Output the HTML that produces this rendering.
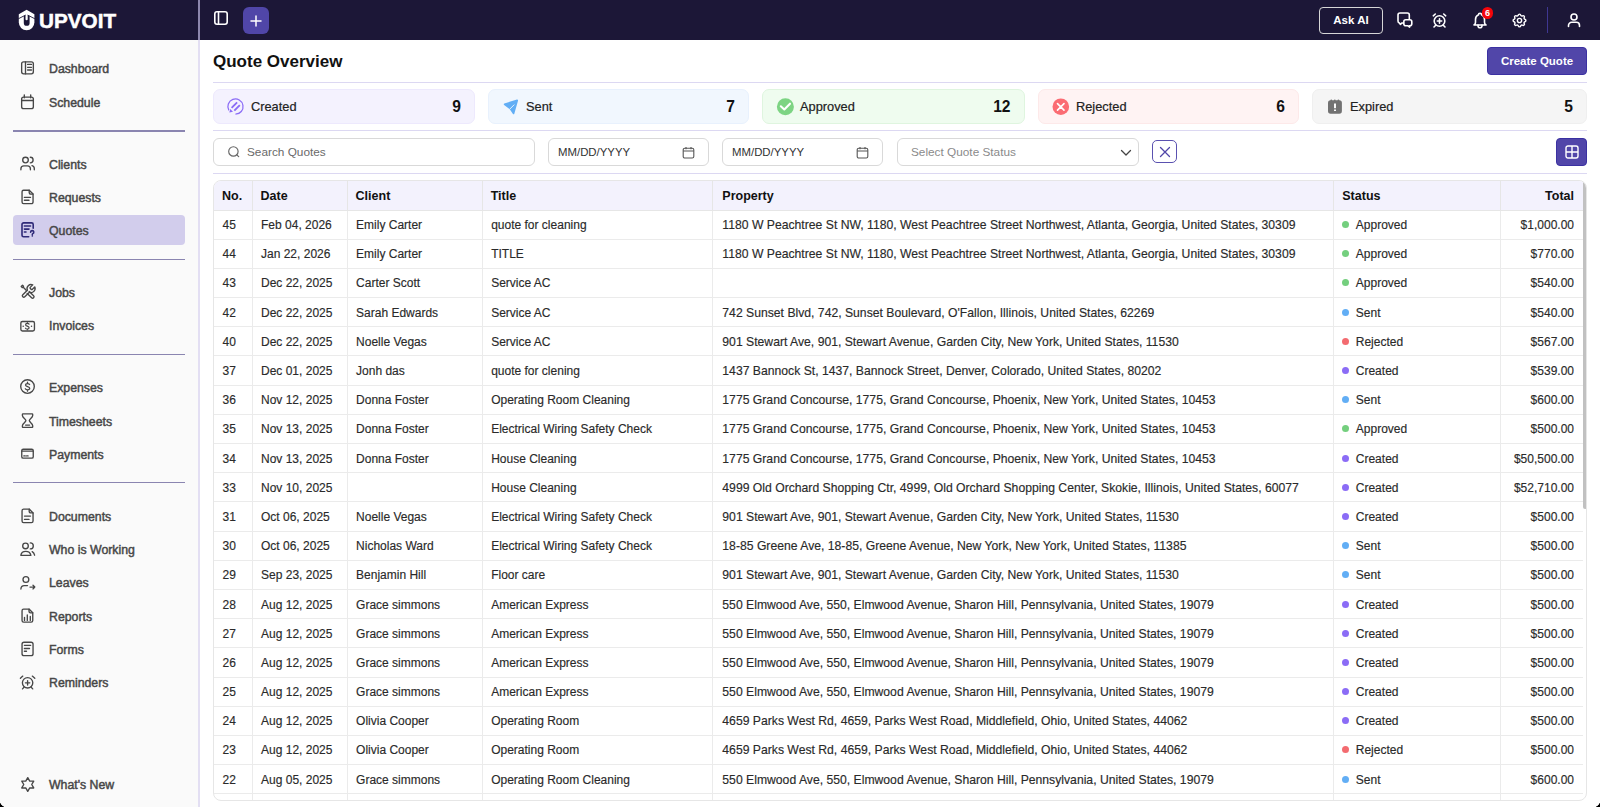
<!DOCTYPE html><html><head><meta charset="utf-8"><style>
*{box-sizing:border-box;margin:0;padding:0}
html,body{width:1600px;height:807px;overflow:hidden;background:#fff;font-family:"Liberation Sans",sans-serif;color:#222}
svg{display:block}
#hdr{position:absolute;left:0;top:0;width:1600px;height:40px;background:#1c1737}
#hdr .vl{position:absolute;left:198px;top:0;width:2px;height:40px;background:#8d87ad}
#side{position:absolute;left:0;top:40px;width:200px;height:767px;background:#fafafa;border-right:2px solid #e3dff3}
.nav{position:absolute;left:13px;width:172px;height:30px;border-radius:4px}
.nav.act{background:#d2cdec}
.nav svg{position:absolute;left:7px;top:7.3px;width:16px;height:16px;overflow:visible;fill:none;stroke:#474747;stroke-width:1.35;stroke-linecap:round;stroke-linejoin:round}
.nav span{position:absolute;left:36px;top:9px;font-size:12.3px;color:#474747;line-height:14px;white-space:nowrap;-webkit-text-stroke:0.45px #474747}
.sdiv{position:absolute;left:12.5px;width:172.5px;height:1.5px;background:#8a85b0}
.hic{position:absolute;fill:none;stroke:#fff;stroke-width:1.6;stroke-linecap:round;stroke-linejoin:round}
#title{position:absolute;left:213px;top:52px;font-size:17px;font-weight:bold;color:#111;line-height:20px}
#cq{position:absolute;left:1487px;top:47px;width:100px;height:28px;background:#5146a9;border:1px solid #3b31a2;border-radius:4px;color:#fff;font-size:11.5px;font-weight:bold;line-height:26px;text-align:center}
.hdiv{position:absolute;left:213px;width:1374px;height:1px;background:#dcd8f2}
.card{position:absolute;top:89px;height:35px;border-radius:7px;border:1px solid}
.card .lb{position:absolute;left:37px;top:9px;font-size:12.8px;color:#222;line-height:15px;-webkit-text-stroke:0.2px #222}
.card .nm{position:absolute;right:13px;top:7.5px;font-size:15.6px;font-weight:bold;color:#111;line-height:17px}
.card svg{position:absolute;left:13px;top:8px;width:18px;height:18px}
.inp{position:absolute;top:138px;height:28px;border:1px solid #d9d9d9;border-radius:6px;background:#fff}
.inp .tx{position:absolute;top:6px;font-size:11.8px;line-height:14px;white-space:nowrap}
#tbl{position:absolute;left:213px;top:180px;width:1374px;height:621px;border:1px solid #e6e6e6;border-radius:8px;overflow:hidden}
table{border-collapse:collapse;table-layout:fixed;position:absolute;left:0;top:0;width:1369px}
th{background:#f3f2fd;height:29px;text-align:left;font-size:12.5px;font-weight:bold;color:#111;padding:1px 0 0 8px;border-right:1px solid #e6e6e6;border-bottom:1px solid #e6e6e6;white-space:nowrap}
td{height:29.2px;font-size:12px;color:#2a2a2a;-webkit-text-stroke:0.15px #2a2a2a;padding:1px 0 0 8.5px;border-right:1px solid #ebebeb;border-bottom:1px solid #ebebeb;white-space:nowrap;overflow:hidden}
th:last-child,td:last-child{border-right:none;text-align:right;padding-left:0;padding-right:9px}
.dot{display:inline-block;width:7px;height:7px;border-radius:50%;margin-right:6.5px;vertical-align:1px}
td.pr{font-size:12.2px;padding-left:9.5px}
td.st{padding-left:8px}
#sb{position:absolute;left:1369px;top:0;width:4px;height:328px;background:#c1c1c1;border-radius:2px}
</style></head><body>
<div id="hdr"><div class="vl"></div>
<svg style="position:absolute;left:18px;top:9px" width="17" height="22" viewBox="0 0 17 22"><path fill="#fff" d="M0.8 5.3L8.6 0.8 16.4 5.3V13.3A7.8 8 0 0 1 0.8 13.3Z"/><path fill="#1c1737" d="M5.8 6.9L8.6 5.5 11.6 6.9V13.9A2.9 2.9 0 0 1 5.8 13.9Z"/><path fill="#fff" d="M7.5 4.5H9.7V10.2A1.1 1.1 0 0 1 7.5 10.2Z"/><path d="M0.3 9.8L7.5 6.1M9.7 6.1L16.9 9.8" fill="none" stroke="#1c1737" stroke-width="0.9"/></svg>
<div style="position:absolute;left:39px;top:10px;font-size:20.7px;font-weight:bold;color:#fff;line-height:22px;-webkit-text-stroke:0.5px #fff">UPVOIT</div>
<svg class="hic" style="left:213px;top:10px" width="16" height="16" viewBox="0 0 16 16"><rect x="1.8" y="1.8" width="12.4" height="12.4" rx="2.2"/><path d="M5.5 2v12"/></svg>
<div style="position:absolute;left:243px;top:7px;width:26px;height:27px;border-radius:6px;background:#5046a8"></div>
<svg class="hic" style="left:249px;top:13.5px" width="14" height="14" viewBox="0 0 14 14"><path d="M7 2v10M2 7h10" stroke-width="1.5"/></svg>
<div style="position:absolute;left:1319px;top:7px;width:64px;height:27px;border:1.5px solid #d6d6d6;border-radius:4px;color:#fff;font-size:11.5px;font-weight:bold;text-align:center;line-height:24px">Ask AI</div>
<svg class="hic" style="left:1396px;top:12px;overflow:visible" width="18" height="17" viewBox="0 0 18 17"><path d="M13.3 7V3A2 2 0 0 0 11.3 1H4A2 2 0 0 0 2 3V9A2 2 0 0 0 3.3 10.9L4.3 12.3L6 11H7.6"/><path d="M9.8 7.8H13.8A2 2 0 0 1 15.8 9.8V11.7A2 2 0 0 1 13.8 13.7H13.4L13.6 15.2L11.6 13.7H9.8A2 2 0 0 1 7.8 11.7V9.8A2 2 0 0 1 9.8 7.8Z"/></svg>
<svg class="hic" style="left:1431px;top:12px" width="17" height="17" viewBox="0 0 17 17"><circle cx="8.5" cy="9" r="5.3"/><path d="M2.3 3.8L4.3 2M14.7 3.8L12.7 2M8.5 6.8v4.4M6.3 9h4.4M4.7 13.2l-1.7 1.8M12.3 13.2l1.7 1.8"/></svg>
<svg class="hic" style="left:1472px;top:12px" width="16" height="17" viewBox="0 0 16 17"><path d="M6.5 2.8a1.5 1.5 0 0 1 3 0A5 5 0 0 1 12.5 7.5v2.8a3 3 0 0 0 1.5 2.7H2a3 3 0 0 0 1.5-2.7V7.5A5 5 0 0 1 6.5 2.8"/><path d="M6 13v.7a2 2 0 0 0 4 0V13"/></svg>
<div style="position:absolute;left:1481.8px;top:7px;width:11.6px;height:11.6px;border-radius:50%;background:#f5050a;color:#fff;font-size:9px;font-weight:bold;text-align:center;line-height:12.4px">6</div>
<svg class="hic" style="left:1511px;top:12px" width="17" height="17" viewBox="0 0 24 24" style="stroke-width:2"><path stroke-width="2" d="M10.3 4.3c.4-1.8 3-1.8 3.4 0a1.7 1.7 0 0 0 2.6 1.1c1.5-.9 3.3.8 2.4 2.4a1.7 1.7 0 0 0 1 2.5c1.8.4 1.8 3 0 3.4a1.7 1.7 0 0 0-1 2.6c.9 1.5-.9 3.3-2.4 2.4a1.7 1.7 0 0 0-2.6 1c-.4 1.8-3 1.8-3.4 0a1.7 1.7 0 0 0-2.6-1c-1.5.9-3.3-.9-2.4-2.4a1.7 1.7 0 0 0-1-2.6c-1.8-.4-1.8-3 0-3.4a1.7 1.7 0 0 0 1-2.5c-.9-1.6.9-3.3 2.4-2.4 1 .6 2.3 0 2.6-1.1z"/><circle stroke-width="2" cx="12" cy="12" r="3"/></svg>
<div style="position:absolute;left:1546.5px;top:7px;width:1.5px;height:26px;background:#3f3792"></div>
<svg class="hic" style="left:1566px;top:12px" width="16" height="16" viewBox="0 0 16 16"><circle cx="8" cy="5" r="3"/><path d="M2.5 14.5v-1a3.2 3.2 0 0 1 3.2-3.2h4.6a3.2 3.2 0 0 1 3.2 3.2v1"/></svg>
</div>
<div id="side">
<div class="nav" style="top:13.2px"><svg viewBox="0 0 16 16"><rect x="1.65" y="1.85" width="11.7" height="12" rx="2"/><path d="M5.5 2v11.7M7.6 4.4h3.9M7.6 7.3h3.9M7.6 10h3.9"/></svg><span>Dashboard</span></div>
<div class="nav" style="top:46.5px"><svg viewBox="0 0 16 16"><rect x="1.65" y="3.05" width="11.7" height="11.6" rx="2"/><path d="M1.8 6.5h11.4M4.3 0.8v2.9M10.7 0.8v2.9"/></svg><span>Schedule</span></div>
<div class="nav" style="top:108.9px"><svg viewBox="0 0 16 16"><circle cx="5.5" cy="4" r="2.8"/><path d="M10.3 1.2A2.8 2.8 0 0 1 10.3 6.8M0.9 13.7V12.8A3 3 0 0 1 3.9 9.8H7.4A3 3 0 0 1 10.4 12.8V13.7M12 9.7A3 3 0 0 1 14.3 12.6V13.7"/></svg><span>Clients</span></div>
<div class="nav" style="top:141.9px"><svg viewBox="0 0 16 16"><path d="M9.2 1.25H3.6A1.6 1.6 0 0 0 2.05 2.85V13.05A1.6 1.6 0 0 0 3.6 14.65H11.45A1.6 1.6 0 0 0 13.05 13.05V5.1Z"/><path d="M9.2 1.25V3.6A1.5 1.5 0 0 0 10.7 5.1H13.05M4.4 8.4h6.1M4.4 11.2h4.6"/></svg><span>Requests</span></div>
<div class="nav act" style="top:175.2px"><svg viewBox="0 0 16 16" style="stroke:#2f2a78"><path d="M8.7 14.8H3.6A1.6 1.6 0 0 1 2 13.2V2.5A1.6 1.6 0 0 1 3.6 0.9H11.6A1.6 1.6 0 0 1 13.2 2.5V6.2M4.4 4h6.1M4.4 7.1h4.6M4.4 10h1.6M10.6 10.3A1.6 1.6 0 1 1 12.6 11.8Q12.3 12 12.3 12.5M12.3 13.9h0.01" stroke-width="1.6"/></svg><span>Quotes</span></div>
<div class="nav" style="top:236.9px"><svg viewBox="0 0 16 16"><g transform="translate(0.35,-0.83) scale(0.67)" stroke-width="2.05"><path d="M14.7 6.3a1 1 0 0 0 0 1.4l1.6 1.6a1 1 0 0 0 1.4 0l3.77-3.77a6 6 0 0 1-7.94 7.94l-6.91 6.91a2.12 2.12 0 0 1-3-3l6.91-6.91a6 6 0 0 1 7.94-7.94l-3.76 3.76z"/></g><path d="M1.2 2.5L2.5 1.2 3.5 2.2 3.3 3.3 2.2 3.5Z M3.3 3.3L6.2 6.2 M9.2 7.4L13.6 11.8A1.4 1.4 0 0 1 11.6 13.8L7.2 9.4"/></svg><span>Jobs</span></div>
<div class="nav" style="top:270.3px"><svg viewBox="0 0 16 16"><rect x="0.85" y="3.45" width="13.6" height="9.5" rx="1.6"/><path d="M9.1 6.1C8.7 5.6 8 5.4 7.3 5.4C6.3 5.4 5.6 5.9 5.6 6.7C5.6 8.4 9.1 7.9 9.1 9.7C9.1 10.5 8.3 11 7.3 11C6.5 11 5.8 10.7 5.5 10.2M7.35 4.6v0.8M7.35 11v0.8" stroke-width="1.2"/><circle cx="3.2" cy="8.2" r="0.75" fill="#474747" stroke="none"/><circle cx="11.5" cy="8.2" r="0.75" fill="#474747" stroke="none"/></svg><span>Invoices</span></div>
<div class="nav" style="top:332.1px"><svg viewBox="0 0 16 16"><circle cx="7.5" cy="7.5" r="6.8"/><path d="M9.6 5.5C9.2 4.9 8.5 4.6 7.5 4.6C6.3 4.6 5.5 5.3 5.5 6.1C5.5 8.1 9.7 7.3 9.7 9.3C9.7 10.2 8.8 10.8 7.5 10.8C6.5 10.8 5.7 10.4 5.3 9.7M7.5 3.2v1.4M7.5 10.8v1.4" stroke-width="1.3"/></svg><span>Expenses</span></div>
<div class="nav" style="top:365.7px"><svg viewBox="0 0 16 16"><path d="M3 0.8H12.1A0.6 0.6 0 0 1 12.7 1.4V2.5C12.7 4.8 9.3 6 9.3 7.6C9.3 9.2 12.7 10.4 12.7 12.7V13.8A0.6 0.6 0 0 1 12.1 14.4H3A0.6 0.6 0 0 1 2.4 13.8V12.7C2.4 10.4 5.9 9.2 5.9 7.6C5.9 6 2.4 4.8 2.4 2.5V1.4A0.6 0.6 0 0 1 3 0.8ZM5.6 12.1H9.6"/></svg><span>Timesheets</span></div>
<div class="nav" style="top:399.0px"><svg viewBox="0 0 16 16"><rect x="1.75" y="3.25" width="11.5" height="8.9" rx="1.5"/><path d="M1.9 5.2h11.2M3.8 9.9h1.5M6.6 9.9h1.5" stroke-width="1.3"/></svg><span>Payments</span></div>
<div class="nav" style="top:460.6px"><svg viewBox="0 0 16 16"><path d="M9.2 1.05H3.6A1.6 1.6 0 0 0 2.05 2.65V12.95A1.6 1.6 0 0 0 3.6 14.55H11.45A1.6 1.6 0 0 0 13.05 12.95V4.9Z"/><path d="M9.2 1.05V3.4A1.5 1.5 0 0 0 10.7 4.9H13.05M4.5 8.1h6M4.5 11.4h4.5"/></svg><span>Documents</span></div>
<div class="nav" style="top:493.7px"><svg viewBox="0 0 16 16"><circle cx="5.5" cy="4.9" r="2.8"/><path d="M0.8 14.3C1.3 11.6 3.3 10.4 5.8 10.4C8.3 10.4 10.3 11.6 10.9 14.3ZM10.3 1.9A3 3 0 0 1 10.3 7.9M12.2 10.6C13.3 11.2 14.2 12.4 14.6 14.2"/></svg><span>Who is Working</span></div>
<div class="nav" style="top:527.4px"><svg viewBox="0 0 16 16"><circle cx="5.9" cy="4.5" r="2.9"/><path d="M0.9 14C1 12 2 10.6 4.2 10.6H7.5M10 12.1H14.8M13 10.3L14.8 12.1 13 13.9"/></svg><span>Leaves</span></div>
<div class="nav" style="top:560.8px"><svg viewBox="0 0 16 16"><path d="M9 1.05H3.6A1.6 1.6 0 0 0 2.05 2.65V12.45A1.6 1.6 0 0 0 3.6 14.05H11.15A1.6 1.6 0 0 0 12.75 12.45V4.8Z"/><path d="M9 1.05V3.3A1.5 1.5 0 0 0 10.5 4.8H12.75M4.5 9.4V12.4M7.3 6.9V12.4M10.3 8.4V12.4"/></svg><span>Reports</span></div>
<div class="nav" style="top:593.8px"><svg viewBox="0 0 16 16"><rect x="2.05" y="1.25" width="11" height="13.4" rx="2"/><path d="M4.4 4.3h6.3M4.4 7.5h5.1M4.4 10.2h2.1"/></svg><span>Forms</span></div>
<div class="nav" style="top:627.2px"><svg viewBox="0 0 16 16"><circle cx="7.6" cy="8.8" r="5.2"/><path d="M0.4 4.3L2.8 2.1M12.3 2.1L14.8 4.3M4 13.3L2.5 14.9M11.2 13.3L12.7 14.9M7.6 6.6V11M5.4 8.8H9.8"/></svg><span>Reminders</span></div>
<div class="nav" style="top:728.6px"><svg viewBox="0 0 16 16"><path d="M7.75 1.60 L9.74 5.05 L13.73 5.05 L11.73 8.50 L13.73 11.95 L9.74 11.95 L7.75 15.40 L5.76 11.95 L1.77 11.95 L3.77 8.50 L1.77 5.05 L5.76 5.05Z"/></svg><span>What's New</span></div>
<div class="sdiv" style="top:90.4px"></div>
<div class="sdiv" style="top:218.8px"></div>
<div class="sdiv" style="top:313.6px"></div>
<div class="sdiv" style="top:441.9px"></div>
</div>
<div id="title">Quote Overview</div>
<div id="cq">Create Quote</div>
<div class="hdiv" style="top:82px"></div>
<div class="hdiv" style="top:130px"></div>
<div class="hdiv" style="top:173px"></div>
<div class="card" style="left:213px;width:262px;background:#f4f2fe;border-color:#ede9fd"><div class="lb">Created</div><div class="nm">9</div></div>
<svg style="position:absolute;left:224px;top:96px" width="24" height="22" viewBox="0 0 24 22"><path d="M11.45 18.2A7.6 7.6 0 1 0 4.87 14.4" fill="none" stroke="#8b6cf6" stroke-width="1.25"/><path d="M7.6 11.9L13.1 6.4M10.3 14.6L15.8 9.1" stroke="#8b6cf6" stroke-width="1.9"/><path d="M5.3 16.6L6.3 13L9 15.7z" fill="#8b6cf6"/></svg>
<div class="card" style="left:488px;width:261px;background:#f1f7fe;border-color:#e8f1fd"><div class="lb">Sent</div><div class="nm">7</div></div>
<svg style="position:absolute;left:500px;top:96px" width="24" height="22" viewBox="0 0 24 22"><path d="M4.6 8.3L17.2 4.4 13.5 17.4 10.3 12.6z" fill="#62aef5" stroke="#62aef5" stroke-width="1.7" stroke-linejoin="round"/><path d="M9.9 13L14.3 8.6" stroke="#f1f7fe" stroke-width="0.9"/></svg>
<div class="card" style="left:762px;width:262.5px;background:#effcef;border-color:#dff5df"><div class="lb">Approved</div><div class="nm">12</div></div>
<svg style="position:absolute;left:770px;top:94px" width="30" height="26" viewBox="0 0 30 26"><circle cx="15.4" cy="12.8" r="8.5" fill="#7dd483"/><path d="M10.8 12.3l3.5 3.2 5.7-5.8" fill="none" stroke="#fff" stroke-width="2.1" stroke-linecap="round" stroke-linejoin="round"/></svg>
<div class="card" style="left:1038px;width:261px;background:#fff3f3;border-color:#fde9e9"><div class="lb">Rejected</div><div class="nm">6</div></div>
<svg style="position:absolute;left:1045px;top:94px" width="30" height="26" viewBox="0 0 30 26"><circle cx="15.8" cy="12.7" r="8.3" fill="#fb6c73"/><path d="M12.5 9.6l6.5 6.5M19 9.6l-6.5 6.5" fill="none" stroke="#fff" stroke-width="1.6" stroke-linecap="round"/></svg>
<div class="card" style="left:1312px;width:275px;background:#f5f5f5;border-color:#efefef"><div class="lb">Expired</div><div class="nm">5</div></div>
<svg style="position:absolute;left:1320px;top:94px" width="30" height="26" viewBox="0 0 30 26"><rect x="8" y="6.2" width="13.9" height="13.5" rx="2.6" fill="#727272"/><circle cx="11.3" cy="6.3" r="0.9" fill="#727272"/><circle cx="14.8" cy="6.3" r="0.9" fill="#727272"/><circle cx="18.4" cy="6.3" r="0.9" fill="#727272"/><path d="M15 9.4v4.9M15 15.5v1.5" stroke="#fff" stroke-width="1.9"/></svg>
<div class="inp" style="left:213px;width:322px"><svg style="position:absolute;left:14px;top:6.8px" width="12" height="12" viewBox="0 0 12 12"><circle cx="5.4" cy="5.4" r="4.7" fill="none" stroke="#666" stroke-width="1.15"/><path d="M8.8 8.8l1.9 1.9" stroke="#666" stroke-width="1.2" stroke-linecap="round"/></svg><div class="tx" style="left:33px;color:#6a6a6a">Search Quotes</div></div>
<div class="inp" style="left:548px;width:161px"><div class="tx" style="left:9px;color:#333;font-size:11.4px">MM/DD/YYYY</div><svg style="position:absolute;right:13px;top:6.5px" width="13" height="13" viewBox="0 0 13 13"><rect x="1.2" y="2.2" width="10.6" height="9.8" rx="1.6" fill="none" stroke="#555" stroke-width="1.1"/><path d="M1.2 5h10.6M4 1v2.2M9 1v2.2" stroke="#555" stroke-width="1.1"/></svg></div>
<div class="inp" style="left:722px;width:161px"><div class="tx" style="left:9px;color:#333;font-size:11.4px">MM/DD/YYYY</div><svg style="position:absolute;right:13px;top:6.5px" width="13" height="13" viewBox="0 0 13 13"><rect x="1.2" y="2.2" width="10.6" height="9.8" rx="1.6" fill="none" stroke="#555" stroke-width="1.1"/><path d="M1.2 5h10.6M4 1v2.2M9 1v2.2" stroke="#555" stroke-width="1.1"/></svg></div>
<div class="inp" style="left:897px;width:242px"><div class="tx" style="left:13px;color:#8a8a8a">Select Quote Status</div><svg style="position:absolute;left:222px;top:9px" width="12" height="9" viewBox="0 0 12 9"><path d="M1.5 2.5l4.5 4.5 4.5-4.5" fill="none" stroke="#444" stroke-width="1.3" stroke-linecap="round" stroke-linejoin="round"/></svg></div>
<div style="position:absolute;left:1152px;top:140px;width:25px;height:23px;border:1px solid #5a51b0;border-radius:5px"><svg style="position:absolute;left:5.5px;top:4.5px" width="12" height="12" viewBox="0 0 12 12"><path d="M1.5 1.5l9 9M10.5 1.5l-9 9" stroke="#5046a8" stroke-width="1.3" stroke-linecap="round"/></svg></div>
<div style="position:absolute;left:1556px;top:138px;width:31px;height:28px;background:#5146a9;border:1px solid #3b31a2;border-radius:4px"><svg style="position:absolute;left:7.5px;top:6px" width="14" height="14" viewBox="0 0 14 14"><rect x="1" y="1" width="12" height="12" rx="2" fill="none" stroke="#fff" stroke-width="1.4"/><path d="M7 1v12M1 7h12" stroke="#fff" stroke-width="1.4"/></svg></div>
<div id="tbl"><table><colgroup><col style="width:38px"><col style="width:95px"><col style="width:135px"><col style="width:230px"><col style="width:621px"><col style="width:167px"><col style="width:82px"></colgroup>
<tr><th>No.</th><th>Date</th><th>Client</th><th>Title</th><th style="padding-left:9.5px">Property</th><th>Status</th><th>Total</th></tr>
<tr><td>45</td><td>Feb 04, 2026</td><td>Emily Carter</td><td>quote for cleaning</td><td class="pr">1180 W Peachtree St NW, 1180, West Peachtree Street Northwest, Atlanta, Georgia, United States, 30309</td><td class="st"><span class="dot" style="background:#74cf7e"></span>Approved</td><td>$1,000.00</td></tr>
<tr><td>44</td><td>Jan 22, 2026</td><td>Emily Carter</td><td>TITLE</td><td class="pr">1180 W Peachtree St NW, 1180, West Peachtree Street Northwest, Atlanta, Georgia, United States, 30309</td><td class="st"><span class="dot" style="background:#74cf7e"></span>Approved</td><td>$770.00</td></tr>
<tr><td>43</td><td>Dec 22, 2025</td><td>Carter Scott</td><td>Service AC</td><td class="pr"></td><td class="st"><span class="dot" style="background:#74cf7e"></span>Approved</td><td>$540.00</td></tr>
<tr><td>42</td><td>Dec 22, 2025</td><td>Sarah Edwards</td><td>Service AC</td><td class="pr">742 Sunset Blvd, 742, Sunset Boulevard, O'Fallon, Illinois, United States, 62269</td><td class="st"><span class="dot" style="background:#62aef5"></span>Sent</td><td>$540.00</td></tr>
<tr><td>40</td><td>Dec 22, 2025</td><td>Noelle Vegas</td><td>Service AC</td><td class="pr">901 Stewart Ave, 901, Stewart Avenue, Garden City, New York, United States, 11530</td><td class="st"><span class="dot" style="background:#f36b70"></span>Rejected</td><td>$567.00</td></tr>
<tr><td>37</td><td>Dec 01, 2025</td><td>Jonh das</td><td>quote for clening</td><td class="pr">1437 Bannock St, 1437, Bannock Street, Denver, Colorado, United States, 80202</td><td class="st"><span class="dot" style="background:#8b6cf6"></span>Created</td><td>$539.00</td></tr>
<tr><td>36</td><td>Nov 12, 2025</td><td>Donna Foster</td><td>Operating Room Cleaning</td><td class="pr">1775 Grand Concourse, 1775, Grand Concourse, Phoenix, New York, United States, 10453</td><td class="st"><span class="dot" style="background:#62aef5"></span>Sent</td><td>$600.00</td></tr>
<tr><td>35</td><td>Nov 13, 2025</td><td>Donna Foster</td><td>Electrical Wiring Safety Check</td><td class="pr">1775 Grand Concourse, 1775, Grand Concourse, Phoenix, New York, United States, 10453</td><td class="st"><span class="dot" style="background:#74cf7e"></span>Approved</td><td>$500.00</td></tr>
<tr><td>34</td><td>Nov 13, 2025</td><td>Donna Foster</td><td>House Cleaning</td><td class="pr">1775 Grand Concourse, 1775, Grand Concourse, Phoenix, New York, United States, 10453</td><td class="st"><span class="dot" style="background:#8b6cf6"></span>Created</td><td>$50,500.00</td></tr>
<tr><td>33</td><td>Nov 10, 2025</td><td></td><td>House Cleaning</td><td class="pr">4999 Old Orchard Shopping Ctr, 4999, Old Orchard Shopping Center, Skokie, Illinois, United States, 60077</td><td class="st"><span class="dot" style="background:#8b6cf6"></span>Created</td><td>$52,710.00</td></tr>
<tr><td>31</td><td>Oct 06, 2025</td><td>Noelle Vegas</td><td>Electrical Wiring Safety Check</td><td class="pr">901 Stewart Ave, 901, Stewart Avenue, Garden City, New York, United States, 11530</td><td class="st"><span class="dot" style="background:#8b6cf6"></span>Created</td><td>$500.00</td></tr>
<tr><td>30</td><td>Oct 06, 2025</td><td>Nicholas Ward</td><td>Electrical Wiring Safety Check</td><td class="pr">18-85 Greene Ave, 18-85, Greene Avenue, New York, New York, United States, 11385</td><td class="st"><span class="dot" style="background:#62aef5"></span>Sent</td><td>$500.00</td></tr>
<tr><td>29</td><td>Sep 23, 2025</td><td>Benjamin Hill</td><td>Floor care</td><td class="pr">901 Stewart Ave, 901, Stewart Avenue, Garden City, New York, United States, 11530</td><td class="st"><span class="dot" style="background:#62aef5"></span>Sent</td><td>$500.00</td></tr>
<tr><td>28</td><td>Aug 12, 2025</td><td>Grace simmons</td><td>American Express</td><td class="pr">550 Elmwood Ave, 550, Elmwood Avenue, Sharon Hill, Pennsylvania, United States, 19079</td><td class="st"><span class="dot" style="background:#8b6cf6"></span>Created</td><td>$500.00</td></tr>
<tr><td>27</td><td>Aug 12, 2025</td><td>Grace simmons</td><td>American Express</td><td class="pr">550 Elmwood Ave, 550, Elmwood Avenue, Sharon Hill, Pennsylvania, United States, 19079</td><td class="st"><span class="dot" style="background:#8b6cf6"></span>Created</td><td>$500.00</td></tr>
<tr><td>26</td><td>Aug 12, 2025</td><td>Grace simmons</td><td>American Express</td><td class="pr">550 Elmwood Ave, 550, Elmwood Avenue, Sharon Hill, Pennsylvania, United States, 19079</td><td class="st"><span class="dot" style="background:#8b6cf6"></span>Created</td><td>$500.00</td></tr>
<tr><td>25</td><td>Aug 12, 2025</td><td>Grace simmons</td><td>American Express</td><td class="pr">550 Elmwood Ave, 550, Elmwood Avenue, Sharon Hill, Pennsylvania, United States, 19079</td><td class="st"><span class="dot" style="background:#8b6cf6"></span>Created</td><td>$500.00</td></tr>
<tr><td>24</td><td>Aug 12, 2025</td><td>Olivia Cooper</td><td>Operating Room</td><td class="pr">4659 Parks West Rd, 4659, Parks West Road, Middlefield, Ohio, United States, 44062</td><td class="st"><span class="dot" style="background:#8b6cf6"></span>Created</td><td>$500.00</td></tr>
<tr><td>23</td><td>Aug 12, 2025</td><td>Olivia Cooper</td><td>Operating Room</td><td class="pr">4659 Parks West Rd, 4659, Parks West Road, Middlefield, Ohio, United States, 44062</td><td class="st"><span class="dot" style="background:#f36b70"></span>Rejected</td><td>$500.00</td></tr>
<tr><td>22</td><td>Aug 05, 2025</td><td>Grace simmons</td><td>Operating Room Cleaning</td><td class="pr">550 Elmwood Ave, 550, Elmwood Avenue, Sharon Hill, Pennsylvania, United States, 19079</td><td class="st"><span class="dot" style="background:#62aef5"></span>Sent</td><td>$600.00</td></tr>
<tr><td></td><td></td><td></td><td></td><td class="pr"></td><td class="st"></td><td></td></tr>
</table><div id="sb"></div></div>
<div style="position:absolute;left:0;top:800px;width:7px;height:7px;background:radial-gradient(circle at 7px 0,transparent 7px,#000 7.6px)"></div>
<div style="position:absolute;left:1593px;top:800px;width:7px;height:7px;background:radial-gradient(circle at 0 0,transparent 7px,#000 7.6px)"></div>
</body></html>
